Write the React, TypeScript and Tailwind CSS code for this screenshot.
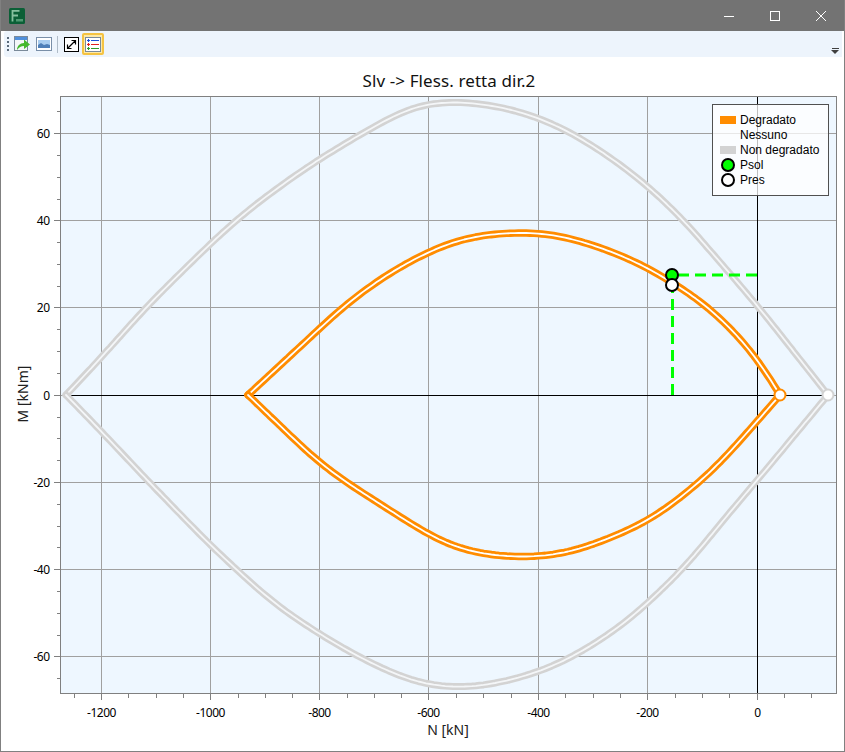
import React from "react";

type P = [number, number];

const resample = (pts: P[], step: number): P[] => {
  const out: P[] = [];
  for (let i = 0; i < pts.length - 1; i++) {
    const [ax, ay] = pts[i];
    const [bx, by] = pts[i + 1];
    const n = Math.max(1, Math.round(Math.hypot(bx - ax, by - ay) / step));
    for (let k = 0; k < n; k++) out.push([ax + ((bx - ax) * k) / n, ay + ((by - ay) * k) / n]);
  }
  out.push(pts[pts.length - 1]);
  return out;
};

const blur = (pts: P[], radius: number): P[] =>
  pts.map((_, i) => {
    const r = Math.min(radius, i, pts.length - 1 - i);
    let sx = 0;
    let sy = 0;
    for (let k = i - r; k <= i + r; k++) {
      sx += pts[k][0];
      sy += pts[k][1];
    }
    return [sx / (2 * r + 1), sy / (2 * r + 1)] as P;
  });

const smooth = (pts: P[]): string => {
  const s = blur(blur(resample(pts, 4), 6), 6);
  return s.map((p, i) => `${i ? "L" : "M"}${p[0].toFixed(1)} ${p[1].toFixed(1)}`).join(" ");
};

const grayTop: P[] = [[66, 395], [100, 359], [147, 306], [210, 244], [237, 219], [273, 191], [319, 159], [368, 130], [400, 112], [422, 103], [457, 101], [500, 106], [538, 117], [567, 130], [600, 150], [640, 179], [680, 216], [707, 247], [757, 305], [828, 395]];
const grayBot: P[] = [[66, 395], [102, 432], [147, 480], [210, 545], [237, 570], [273, 603], [319, 634], [360, 658], [410, 681], [430, 686], [457, 688], [487, 686], [538, 673], [577, 655], [623, 625], [648, 603], [687, 565], [730, 512], [760, 477], [828, 395]];
const orTop: P[] = [[248, 395], [317, 331], [347, 303], [380, 279], [413, 259], [460, 238], [510, 232], [523, 232], [557, 234], [600, 247], [640, 263], [672, 282], [707, 305], [740, 338], [757, 358], [780, 395]];
const orBot: P[] = [[248, 395], [319, 463], [347, 483], [410, 523], [428, 535], [457, 549], [487, 555], [523, 558], [557, 555], [583, 549], [648, 522], [697, 485], [723, 460], [760, 418], [780, 395]];

const X = (n: number) => 757.2 + n * 0.5465;
const Y = (m: number) => 395.3 - m * 4.36;

const xMajor: [number, number][] = [[-1200, 101], [-1000, 210], [-800, 319], [-600, 428], [-400, 538], [-200, 647], [0, 757]];
const yMajor: [number, number][] = [[60, 133], [40, 220], [20, 307], [0, 395], [-20, 482], [-40, 569], [-60, 656]];
const xMinor = [-1250, -1150, -1100, -1050, -950, -900, -850, -750, -700, -650, -550, -500, -450, -350, -300, -250, -150, -100, -50, 50, 100];
const yMinor = [65, 55, 50, 45, 35, 30, 25, 15, 10, 5, -5, -10, -15, -25, -30, -35, -45, -50, -55, -65];

function Chart() {
  const fx = (v: number) => Math.floor(X(v)) + 0.5;
  const fy = (v: number) => Math.floor(Y(v)) + 0.5;
  return (
    <svg width={843} height={656} viewBox="1 95 843 656" className="block font-['Noto_Sans',sans-serif]">
      <rect x={60.5} y={96.5} width={776} height={597} fill="#eef7ff" />
      {xMajor.filter(([v]) => v !== 0).map(([v, px]) => (
        <line key={v} x1={px + 0.5} x2={px + 0.5} y1={96} y2={694} stroke="#a0a0a0" />
      ))}
      {yMajor.map(([v, py]) => (
        <line key={v} x1={60} x2={837} y1={py + 0.5} y2={py + 0.5} stroke="#a0a0a0" />
      ))}
      <line x1={66} x2={828} y1={395.5} y2={395.5} stroke="#000" />
      <line x1={757.5} x2={757.5} y1={96} y2={694} stroke="#000" />
      <rect x={60.5} y={96.5} width={776} height={597} fill="none" stroke="#808080" />

      {xMajor.map(([v, px]) => (
        <line key={v} x1={px + 0.5} x2={px + 0.5} y1={694} y2={700} stroke="#808080" />
      ))}
      {xMinor.map((v) => (
        <line key={v} x1={fx(v)} x2={fx(v)} y1={694} y2={698} stroke="#808080" />
      ))}
      {yMajor.map(([v, py]) => (
        <line key={v} x1={54} x2={60} y1={py + 0.5} y2={py + 0.5} stroke="#808080" />
      ))}
      {yMinor.map((v) => (
        <line key={v} x1={57} x2={60} y1={fy(v)} y2={fy(v)} stroke="#808080" />
      ))}

      {xMajor.map(([v, px]) => (
        <text key={v} x={px + 0.5} y={717} textAnchor="middle" fontSize={12} letterSpacing={-0.5} fill="#000">
          {v}
        </text>
      ))}
      {yMajor.map(([v, py]) => (
        <text key={v} x={49.5} y={py + 4.8} textAnchor="end" fontSize={12} letterSpacing={-0.5} fill="#000">
          {v}
        </text>
      ))}
      <text x={448} y={735} textAnchor="middle" fontSize={14} fill="#202020">
        N [kN]
      </text>
      <text x={0} y={0} transform="translate(28 394) rotate(-90)" textAnchor="middle" fontSize={14} fill="#202020">
        M [kNm]
      </text>

      <g fill="none" strokeLinejoin="round" strokeLinecap="round">
        {[grayTop, grayBot].map((p, i) => (
          <g key={i}>
            <path d={smooth(p)} stroke="#d3d3d3" strokeWidth={7} />
            <path d={smooth(p)} stroke="#f4f6f8" strokeWidth={1.8} />
          </g>
        ))}
        {[orTop, orBot].map((p, i) => (
          <g key={i}>
            <path d={smooth(p)} stroke="#ff8c00" strokeWidth={7.4} />
            <path d={smooth(p)} stroke="#ffffff" strokeWidth={1.8} />
          </g>
        ))}
      </g>

      <circle cx={828} cy={395} r={5.5} fill="#fff" stroke="#d3d3d3" strokeWidth={2} />
      <circle cx={780} cy={395} r={5.5} fill="#fff" stroke="#ff8c00" strokeWidth={2} />

      <path d="M672.5 395V275" stroke="#00ff00" strokeWidth={3} strokeDasharray="11 6" fill="none" />
      <path d="M757 275H672.5" stroke="#00ff00" strokeWidth={3} strokeDasharray="11 6" fill="none" />
      <circle cx={672} cy={275} r={6} fill="#00ff00" stroke="#000" strokeWidth={2} />
      <circle cx={672} cy={285} r={6} fill="#fff" stroke="#000" strokeWidth={2} />
    </svg>
  );
}

function LegendRow({ children, label }: { children?: React.ReactNode; label: string }) {
  return (
    <div className="flex h-[15px] items-center">
      <div className="flex w-[24px] shrink-0 justify-center pr-[1px]">{children}</div>
      <span className="mt-[1px] block h-[14px] leading-[15px] whitespace-nowrap">{label}</span>
    </div>
  );
}

function Legend() {
  return (
    <div className="absolute left-[711px] top-[47px] h-[92px] w-[117px] border border-[#505050] bg-white/75 pl-[3px] pt-[7px] text-[12px] leading-[15px] text-black font-['Liberation_Sans',sans-serif]">
      <LegendRow label="Degradato">
        <div className="h-[8px] w-[16px] bg-[#ff8c00]" />
      </LegendRow>
      <LegendRow label="Nessuno" />
      <LegendRow label="Non degradato">
        <div className="h-[8px] w-[16px] bg-[#d3d3d3]" />
      </LegendRow>
      <LegendRow label="Psol">
        <div className="h-[14px] w-[14px] rounded-full border-2 border-black bg-[#00ff00]" />
      </LegendRow>
      <LegendRow label="Pres">
        <div className="h-[14px] w-[14px] rounded-full border-2 border-black bg-white" />
      </LegendRow>
    </div>
  );
}

function AppIcon() {
  return (
    <svg width={16} height={16} viewBox="0 0 16 16" className="block">
      <rect x={0} y={0} width={16} height={16} rx={1.5} fill="#0b5f36" />
      <path d="M3.500 13.500V2.800h7M3.500 7.500h5.500" stroke="#86c09e" strokeWidth={1.8} fill="none" />
      <rect x={7} y={11} width={7} height={2.5} fill="#4f9a72" />
    </svg>
  );
}

function ToolbarIcons() {
  return (
    <div className="flex items-center">
      <div className="ml-[3px] flex flex-col gap-[2px]">
        {[0, 1, 2, 3].map((i) => (
          <div key={i} className="h-[2px] w-[2px] bg-[#5a6a7a]" />
        ))}
      </div>
      <svg width={16} height={16} viewBox="0 0 16 16" className="ml-[5px] block">
        <rect x={0.5} y={0.5} width={13} height={14} fill="#f4f6f8" stroke="#7a8a9a" />
        <rect x={1} y={1} width={12} height={3} fill="#4f8fdc" />
        <path d="M3 14c0-4 3-7 7-7V3.500l6 5-6 4.500v-3c-3 0-5 1.500-7 4z" fill="#45b82e" />
      </svg>
      <svg width={16} height={15} viewBox="0 0 16 15" className="ml-[6px] block">
        <rect x={0.5} y={0.5} width={15} height={13} fill="#fff" stroke="#7a8fa8" />
        <rect x={2} y={3} width={12} height={5} fill="#a9cdf0" />
        <path d="M2 11V8l3-2 3 2 3-1 3 1v3z" fill="#4f7fb8" />
      </svg>
      <div className="ml-[5px] h-[17px] w-[1px] bg-[#b0bcc8]" />
      <svg width={15} height={15} viewBox="0 0 15 15" className="ml-[6px] block">
        <rect x={0.5} y={0.5} width={14} height={14} fill="#fff" stroke="#000" />
        <path d="M3.500 11.500l8-8M7.500 3.500h4v4M3.500 7.500v4h4" stroke="#000" strokeWidth={1.2} fill="none" />
      </svg>
      <div className="ml-[3px] flex h-[22px] w-[22px] items-center justify-center rounded-[2px] border-2 border-[#f5c342] bg-[#fde9a8]">
        <svg width={16} height={15} viewBox="0 0 16 15" className="block">
          <rect x={0.5} y={0.5} width={15} height={14} fill="#fff" stroke="#7a8a9a" />
          <path d="M2 3.500h3M3.500 2v3M6 3.500h8" stroke="#1a4fd8" strokeWidth={1.1} fill="none" />
          <path d="M2 7.500h3M3.500 6v3M6 7.500h8" stroke="#e02020" strokeWidth={1.1} fill="none" />
          <path d="M2 11.500h3M3.500 10v3M6 11.500h8" stroke="#2a9a2a" strokeWidth={1.1} fill="none" />
        </svg>
      </div>
    </div>
  );
}

export default function App() {
  return (
    <div className="flex h-[752px] w-[845px] flex-col border-b border-l border-r border-[#808080] bg-white">
      <div className="flex h-[31px] shrink-0 items-center justify-between bg-[#737373] pl-[8px]">
        <AppIcon />
        <div className="flex items-center">
          <svg width={46} height={30} viewBox="0 0 46 30" className="block">
            <path d="M18 15.500h10" stroke="#fff" />
          </svg>
          <svg width={46} height={30} viewBox="0 0 46 30" className="block">
            <rect x={18.5} y={10.5} width={9} height={9} stroke="#fff" fill="none" />
          </svg>
          <svg width={46} height={30} viewBox="0 0 46 30" className="block">
            <path d="M18 10l10 10M28 10L18 20" stroke="#fff" fill="none" />
          </svg>
        </div>
      </div>
      <div className="ml-[3px] mr-[2px] flex h-[26px] shrink-0 items-center justify-between rounded-l-[3px] bg-[#edf4fc]">
        <ToolbarIcons />
        <div className="mr-[3px] mt-[14px] flex flex-col items-center gap-[1px]">
          <div className="h-[1px] w-[7px] bg-[#404040]" />
          <div className="h-0 w-0 border-x-[4px] border-t-[4px] border-x-transparent border-t-[#404040]" />
        </div>
      </div>
      <div className="relative flex-1">
        <div className="flex h-[38px] items-center justify-center pl-[53px] pt-[9px] text-[17px] tracking-[0.1px] text-[#111] font-['Noto_Sans',sans-serif]">
          Slv -&gt; Fless. retta dir.2
        </div>
        <Chart />
        <Legend />
      </div>
    </div>
  );
}
